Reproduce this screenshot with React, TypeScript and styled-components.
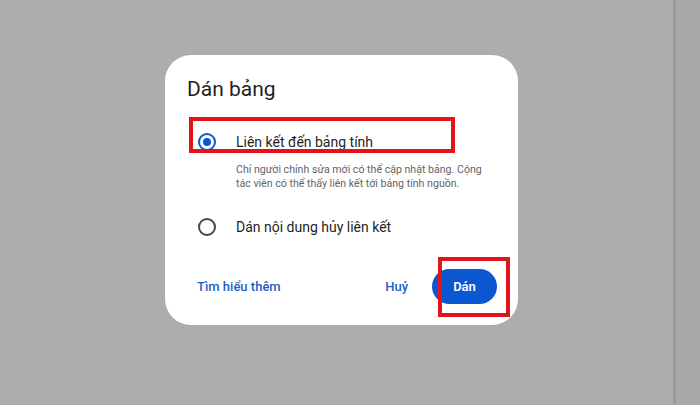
import React, { useState } from "react";
import styled, { createGlobalStyle } from "styled-components";

const GlobalStyle = createGlobalStyle`
  html, body {
    margin: 0;
    padding: 0;
    background: #adadad;
    font-family: Roboto, "Noto Sans", "Liberation Sans", sans-serif;
  }
`;

type Option = {
  id: string;
  label: string;
  hint?: string;
};

const options: Option[] = [
  {
    id: "link",
    label: "Liên kết đến bảng tính",
    hint: "Chỉ người chỉnh sửa mới có thể cập nhật bảng. Cộng tác viên có thể thấy liên kết tới bảng tính nguồn.",
  },
  { id: "unlink", label: "Dán nội dung hủy liên kết" },
];

function App() {
  const [selected, setSelected] = useState("link");

  return (
    <>
      <GlobalStyle />
      <Page>
        <Stage>
          <Dialog>
            <Title>Dán bảng</Title>

            {options.map((item) => (
              <OptionBlock key={item.id} $gap={item.hint ? 0 : 22}>
                <OptionRow onClick={() => setSelected(item.id)}>
                  <Radio $checked={selected === item.id} />
                  <OptionLabel>{item.label}</OptionLabel>
                </OptionRow>
                {item.hint ? <Hint>{item.hint}</Hint> : null}
              </OptionBlock>
            ))}

            <Footer>
              <TextButton>Tìm hiểu thêm</TextButton>
              <Actions>
                <TextButton>Huỷ</TextButton>
                <PrimaryButton>Dán</PrimaryButton>
              </Actions>
            </Footer>

            {/* red annotation frames drawn over the dialog */}
            <Highlight $left={24} $top={62} $width={266} $height={36} />
            <Highlight $left={273} $top={202} $width={72} $height={60} />
          </Dialog>
        </Stage>
        <Divider />
        <SidePane />
      </Page>
    </>
  );
}

export default App;

const Page = styled.div`
  display: flex;
  width: 700px;
  height: 405px;
  overflow: hidden;
`;

const Stage = styled.div`
  flex: 1;
  background: #adadad;
  padding: 55px 0 0 165px;
`;

const Divider = styled.div`
  width: 3px;
  background: #9a9b9d;
`;

const SidePane = styled.div`
  width: 24px;
  background: #a8a9ab;
`;

const Dialog = styled.div`
  position: relative;
  box-sizing: border-box;
  width: 353px;
  height: 270px;
  background: #ffffff;
  border-radius: 26px;
  padding: 20px 21px 0 22px;
  display: flex;
  flex-direction: column;
`;

const Title = styled.h2`
  margin: 0 0 25px 0;
  font-size: 21px;
  line-height: 28px;
  font-weight: 400;
  color: #1f1f1f;
`;

const OptionBlock = styled.div<{ $gap: number }>`
  display: flex;
  flex-direction: column;
  padding-top: ${(p) => p.$gap}px;
`;

const OptionRow = styled.label`
  display: flex;
  align-items: center;
  height: 28px;
  padding-left: 11px;
  cursor: pointer;
`;

const Radio = styled.span<{ $checked: boolean }>`
  box-sizing: border-box;
  width: 18px;
  height: 18px;
  border-radius: 50%;
  border: 2px solid ${(p) => (p.$checked ? "#0b57d0" : "#444746")};
  display: flex;
  align-items: center;
  justify-content: center;
  flex-shrink: 0;

  &::after {
    content: "";
    width: 8px;
    height: 8px;
    border-radius: 50%;
    background: ${(p) => (p.$checked ? "#0b57d0" : "transparent")};
  }
`;

const OptionLabel = styled.span`
  margin-left: 20px;
  font-size: 14px;
  color: #1f1f1f;
`;

const Hint = styled.p`
  margin: 7px 0 0 49px;
  width: 262px;
  font-size: 10.6px;
  line-height: 14px;
  color: #5f6368;
`;

const Footer = styled.div`
  display: flex;
  align-items: center;
  justify-content: space-between;
  margin-top: 28px;
`;

const Actions = styled.div`
  display: flex;
  align-items: center;
  gap: 14px;
`;

const TextButton = styled.button`
  border: none;
  background: transparent;
  padding: 0 10px;
  height: 35px;
  font-family: Roboto, "Noto Sans", sans-serif;
  font-size: 13px;
  font-weight: 500;
  color: #1c5fc6;
  cursor: pointer;
`;

const PrimaryButton = styled.button`
  border: none;
  width: 65px;
  height: 35px;
  border-radius: 18px;
  background: #0b57d0;
  color: #ffffff;
  font-family: Roboto, "Noto Sans", sans-serif;
  font-size: 13px;
  font-weight: 600;
  cursor: pointer;
`;

const Highlight = styled.div<{
  $left: number;
  $top: number;
  $width: number;
  $height: number;
}>`
  position: absolute;
  box-sizing: border-box;
  left: ${(p) => p.$left}px;
  top: ${(p) => p.$top}px;
  width: ${(p) => p.$width}px;
  height: ${(p) => p.$height}px;
  border: 4px solid #e1141e;
  pointer-events: none;
`;
